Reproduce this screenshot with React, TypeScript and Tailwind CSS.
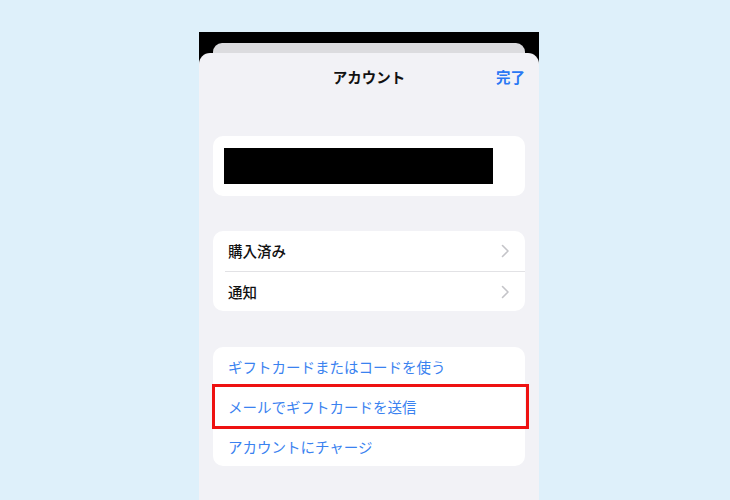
const FONT = '"Noto Sans CJK JP", "Noto Sans", sans-serif'

const Chevron = () => (
  <svg width="9" height="14" viewBox="0 0 9 14" fill="none" className="shrink-0">
    <path d="M1.5 1.5 L7 7 L1.5 12.5" stroke="#c4c4c8" strokeWidth="1.6" strokeLinecap="round" strokeLinejoin="round" />
  </svg>
)

export default function App() {
  return (
    <div
      className="flex h-[500px] w-[730px] justify-center overflow-hidden bg-[#def0fa] pl-[8px]"
      style={{ fontFamily: FONT }}
    >
      <div className="mt-[32px] flex w-[340px] flex-col bg-black">
        {/* sheet peeking behind */}
        <div className="mx-[14px] mt-[11px] h-[10px] rounded-t-[9px] bg-[#dcdcdf]" />

        {/* account sheet */}
        <div className="flex flex-1 flex-col rounded-t-[11px] bg-[#f2f2f6] px-[14px]">
          <div className="relative flex h-[47px] items-center justify-center">
            <span className="text-[14.5px] font-bold text-[#111]">アカウント</span>
            <span className="absolute right-[0px] text-[14.5px] font-bold text-[#2a78f4]">完了</span>
          </div>

          <div className="mt-[36px] flex h-[60px] items-center rounded-[10px] bg-white pl-[11px]">
            <div className="h-[36px] w-[269px] bg-black" />
          </div>

          <div className="mt-[35px] rounded-[10px] bg-white">
            <div className="flex h-[40px] items-center justify-between pl-[15px] pr-[15px]">
              <span className="text-[14.5px] font-medium text-[#111]">購入済み</span>
              <Chevron />
            </div>
            <div className="ml-[12px] h-px bg-[#e2e2e5]" />
            <div className="flex h-[39px] items-center justify-between pl-[15px] pr-[15px]">
              <span className="text-[14.5px] font-medium text-[#111]">通知</span>
              <Chevron />
            </div>
          </div>

          <div className="relative mt-[36px] rounded-[10px] bg-white">
            <div className="flex h-[39px] items-center pl-[15px]">
              <span className="text-[14.5px] text-[#3a82f0]">ギフトカードまたはコードを使う</span>
            </div>
            <div className="flex h-[41px] items-center pl-[15px]">
              <span className="text-[14.5px] text-[#3a82f0]">メールでギフトカードを送信</span>
            </div>
            <div className="flex h-[39px] items-center pl-[15px]">
              <span className="text-[14.5px] text-[#3a82f0]">アカウントにチャージ</span>
            </div>
            {/* highlight */}
            <div className="absolute left-[-1px] top-[37px] h-[45px] w-[317px] border-[3px] border-[#ee1111]" />
          </div>
        </div>
      </div>
    </div>
  )
}
